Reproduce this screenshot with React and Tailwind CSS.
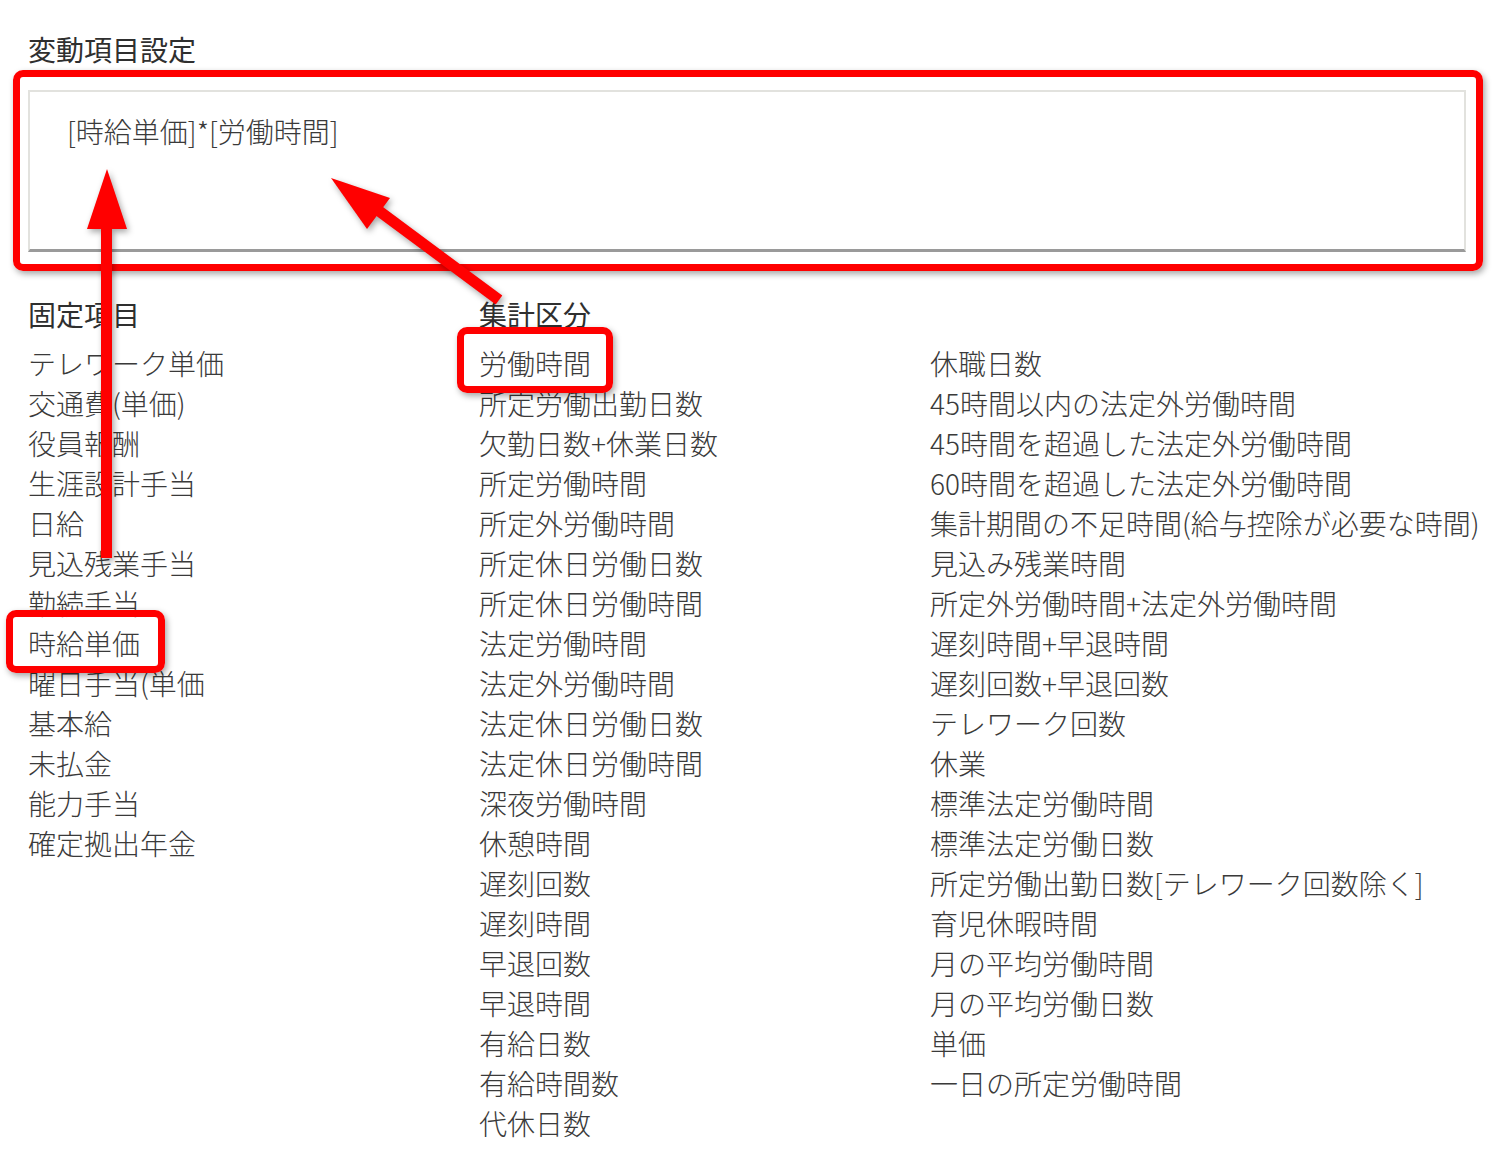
import React from 'react';

const fixedItems = [
  'テレワーク単価',
  '交通費(単価)',
  '役員報酬',
  '生涯設計手当',
  '日給',
  '見込残業手当',
  '勤続手当',
  '時給単価',
  '曜日手当(単価',
  '基本給',
  '未払金',
  '能力手当',
  '確定拠出年金',
];

const totalItems = [
  '労働時間',
  '所定労働出勤日数',
  '欠勤日数+休業日数',
  '所定労働時間',
  '所定外労働時間',
  '所定休日労働日数',
  '所定休日労働時間',
  '法定労働時間',
  '法定外労働時間',
  '法定休日労働日数',
  '法定休日労働時間',
  '深夜労働時間',
  '休憩時間',
  '遅刻回数',
  '遅刻時間',
  '早退回数',
  '早退時間',
  '有給日数',
  '有給時間数',
  '代休日数',
];

const moreItems = [
  '休職日数',
  '45時間以内の法定外労働時間',
  '45時間を超過した法定外労働時間',
  '60時間を超過した法定外労働時間',
  '集計期間の不足時間(給与控除が必要な時間)',
  '見込み残業時間',
  '所定外労働時間+法定外労働時間',
  '遅刻時間+早退時間',
  '遅刻回数+早退回数',
  'テレワーク回数',
  '休業',
  '標準法定労働時間',
  '標準法定労働日数',
  '所定労働出勤日数[テレワーク回数除く]',
  '育児休暇時間',
  '月の平均労働時間',
  '月の平均労働日数',
  '単価',
  '一日の所定労働時間',
];

function ItemColumn({ title, items }) {
  return (
    <div className="w-[451px] shrink-0">
      <h3 className="h-10 mb-[9px] leading-[40px] font-normal text-[#2f2f2f]">{title}</h3>
      <ul>
        {items.map(item => (
          <li key={item} className="leading-[40px] whitespace-nowrap">{item}</li>
        ))}
      </ul>
    </div>
  );
}

export default function App() {
  return (
    <div
      className="relative w-[1512px] h-[1166px] overflow-hidden bg-white text-[28px] text-[#3a3a3a] font-light"
      style={{ fontFamily: '"Noto Sans CJK JP", "Noto Sans", sans-serif' }}
    >
      <div className="pt-[29px] pl-[28px]">
        <h2 className="leading-[40px] font-normal text-[#2f2f2f]">変動項目設定</h2>

        {/* formula box */}
        <div className="mt-[21px] w-[1438px] h-[162px] border-2 border-b-[3px] border-[#e2e2de] border-b-[#9a9a9a] bg-white pl-[37px] pt-[19px] leading-[40px]">
          [時給単価]*[労働時間]
        </div>

        {/* item lists */}
        <div className="mt-[42px] flex">
          <ItemColumn title="固定項目" items={fixedItems} />
          <ItemColumn title="集計区分" items={totalItems} />
          <ItemColumn title="" items={moreItems} />
        </div>
      </div>

      {/* annotation overlays */}
      <div className="absolute left-[13px] top-[70px] w-[1470px] h-[201px] border-[7px] border-[#ff0000] rounded-[10px] shadow-[2px_3px_6px_rgba(0,0,0,0.35)]" />
      <div className="absolute left-[6px] top-[610px] w-[159px] h-[63px] border-[7px] border-[#ff0000] rounded-[10px] shadow-[2px_3px_6px_rgba(0,0,0,0.35)]" />
      <div className="absolute left-[457px] top-[327px] w-[156px] h-[66px] border-[7px] border-[#ff0000] rounded-[10px] shadow-[2px_3px_6px_rgba(0,0,0,0.35)]" />

      <svg
        className="absolute inset-0 pointer-events-none"
        width="1512"
        height="1166"
        style={{ filter: 'drop-shadow(2px 3px 3px rgba(0,0,0,0.35))' }}
      >
        {/* vertical arrow */}
        <rect x="101" y="226" width="11" height="332" fill="#ff0000" />
        <polygon points="107,169 87,229 127,229" fill="#ff0000" />
        {/* diagonal arrow */}
        <line x1="499" y1="300" x2="375" y2="208" stroke="#ff0000" strokeWidth="11" />
        <polygon points="331,178 390,198 367,229" fill="#ff0000" />
      </svg>
    </div>
  );
}
